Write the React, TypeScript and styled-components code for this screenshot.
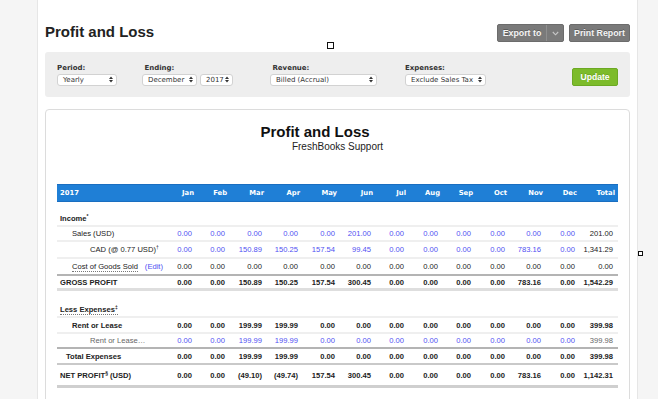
import React from "react";
import styled, { createGlobalStyle } from "styled-components";

const Global = createGlobalStyle`
  html, body { margin: 0; padding: 0; background: #f5f5f5; }
  body { font-family: "Liberation Sans", Arial, sans-serif; color: #222; overflow: hidden; }
  * { box-sizing: content-box; }
`;

const Page = styled.div`
  position: relative;
  width: 658px;
  height: 399px;
  overflow: hidden;
  background: #f5f5f5;
`;

const Main = styled.div`
  margin-left: 37px;
  width: 585px;
  height: 399px;
  padding: 0 7px;
  background: #fff;
  border-left: 1px solid #e6e6e6;
  border-right: 1px solid #e6e6e6;
`;

const TopBar = styled.div`
  display: flex;
  align-items: center;
  justify-content: space-between;
  padding-top: 24px;
  height: 18px;
`;

const PageTitle = styled.h1`
  margin: -2px 0 0;
  font-size: 15px;
  line-height: 18px;
  font-weight: bold;
  color: #222;
`;

const ButtonGroup = styled.div`
  display: flex;
  gap: 5px;
`;

const GrayButton = styled.div<{ $w: number }>`
  display: flex;
  align-items: stretch;
  width: ${(p) => p.$w}px;
  height: 18px;
  box-sizing: border-box;
  background: #7a7a7a;
  border: 1px solid #6c6c6c;
  border-radius: 2px;
  color: #f4f4f4;
  font-size: 8.8px;
  font-weight: bold;
  text-shadow: 0 -1px 0 rgba(0, 0, 0, 0.25);
`;

const ButtonPart = styled.span<{ $w?: number; $divider?: boolean }>`
  display: flex;
  align-items: center;
  justify-content: center;
  flex: ${(p) => (p.$w ? `0 0 ${p.$w}px` : "1")};
  border-left: ${(p) => (p.$divider ? "1px solid #8f8f8f" : "none")};
`;

const FilterBar = styled.div`
  margin-top: 10px;
  height: 45px;
  box-sizing: border-box;
  background: #eeeeee;
  border-radius: 3px;
  display: flex;
  align-items: center;
  padding: 0 12px;
`;

const FilterGroup = styled.div<{ $w?: number }>`
  display: flex;
  flex-direction: column;
  gap: 1px;
  width: ${(p) => (p.$w ? `${p.$w}px` : "auto")};
`;

const FilterLabel = styled.div`
  font-family: "DejaVu Sans", Verdana, sans-serif;
  font-weight: bold;
  font-size: 7px;
  line-height: 9px;
  color: #333;
`;

const SelectRow = styled.div`
  display: flex;
  gap: 3px;
`;

const SelectBox = styled.div<{ $w: number }>`
  display: flex;
  align-items: center;
  justify-content: space-between;
  width: ${(p) => p.$w}px;
  height: 12px;
  box-sizing: border-box;
  padding: 0 3px 0 5px;
  background: #fff;
  border: 1px solid #d2d2d2;
  border-radius: 3px;
  font-family: "DejaVu Sans", Verdana, sans-serif;
  font-size: 7px;
  color: #333;
  white-space: nowrap;
`;

const UpdateButton = styled.div`
  margin-left: auto;
  margin-top: 5px;
  width: 46px;
  height: 18px;
  box-sizing: border-box;
  display: flex;
  align-items: center;
  justify-content: center;
  background: #7cbb2a;
  border: 1px solid #6ca923;
  border-radius: 2px;
  color: #fff;
  font-size: 8.6px;
  font-weight: bold;
  text-shadow: 0 -1px 0 rgba(0, 0, 0, 0.15);
`;

const Card = styled.div`
  margin-top: 12px;
  height: 300px;
  border: 1px solid #dcdcdc;
  border-radius: 4px;
  padding: 0 11px;
  background: #fff;
`;

const ReportTitle = styled.div`
  padding-top: 13px;
  padding-right: 45px;
  font-size: 15px;
  line-height: 17px;
  font-weight: bold;
  text-align: center;
  color: #111;
`;

const ReportSub = styled.div`
  margin-top: 1px;
  font-size: 10px;
  line-height: 12px;
  text-align: center;
  color: #222;
`;

const Table = styled.div`
  margin-top: 31px;
`;

const COLS = "103px 37px 33px 37px 36px 37px 36px 33px 34px 33px 34px 36px 34px 38px";

const HeaderRow = styled.div`
  display: grid;
  grid-template-columns: ${COLS};
  align-items: center;
  height: 18px;
  background: #1f7fd6;
  box-shadow: inset 0 1px 0 #1a6ec0, inset 0 -1px 0 #1a6ec0;
  color: #fff;
  font-family: "DejaVu Sans", Verdana, sans-serif;
  font-weight: bold;
  font-size: 6.8px;
`;

const HeadCell = styled.div<{ $left?: boolean }>`
  text-align: ${(p) => (p.$left ? "left" : "right")};
  padding: ${(p) => (p.$left ? "0 0 0 3px" : "0 3px 0 0")};
`;

type Line = "light" | "dark" | "thick" | "thickDark" | "mid";
const lineStyle: Record<Line, string> = {
  light: "2px solid #efefef",
  mid: "2px solid #c9c9c9",
  dark: "2px solid #b4b4b4",
  thick: "3px solid #dedede",
  thickDark: "3px solid #cfcfcf",
};

const Row = styled.div<{ $h: number; $line: Line; $mt?: number }>`
  display: grid;
  grid-template-columns: ${COLS};
  align-items: center;
  height: ${(p) => p.$h}px;
  margin-top: ${(p) => p.$mt || 0}px;
  border-bottom: ${(p) => lineStyle[p.$line]};
  font-size: 7.6px;
  white-space: nowrap;
`;

type Tone = "blue" | "dark" | "gray";
const toneColor: Record<Tone, string> = {
  blue: "#5050f2",
  dark: "#222",
  gray: "#666",
};

const Cell = styled.div<{ $tone: Tone; $bold?: boolean }>`
  text-align: right;
  padding-right: 5px;
  color: ${(p) => toneColor[p.$tone]};
  font-weight: ${(p) => (p.$bold ? "bold" : "normal")};
`;

const LabelCell = styled.div<{ $indent: number; $bold?: boolean; $tone?: Tone }>`
  padding-left: ${(p) => p.$indent}px;
  font-weight: ${(p) => (p.$bold ? "bold" : "normal")};
  color: ${(p) => toneColor[p.$tone || "dark"]};
  overflow: visible;
`;

const Dotted = styled.span`
  border-bottom: 1px dotted #777;
`;

const EditLink = styled.span`
  color: #5050f2;
  margin-left: 7px;
`;

const Sup = styled.sup`
  font-size: 5px;
  line-height: 0;
  vertical-align: 3px;
`;

const Handle = styled.div<{ $x: number; $y: number; $s: number }>`
  position: absolute;
  left: ${(p) => p.$x}px;
  top: ${(p) => p.$y}px;
  width: ${(p) => p.$s}px;
  height: ${(p) => p.$s}px;
  box-sizing: border-box;
  border: 1px solid #111;
  background: #fff;
`;

const Arrows = () => (
  <svg width="4" height="7" viewBox="0 0 4 7">
    <path d="M0 3 L2 0.5 L4 3 Z M0 4 L2 6.5 L4 4 Z" fill="#333" />
  </svg>
);

const Chevron = () => (
  <svg width="7" height="5" viewBox="0 0 7 5">
    <polyline points="0.8,1 3.5,3.8 6.2,1" fill="none" stroke="#c8c8c8" strokeWidth="1.1" />
  </svg>
);

const MONTHS = ["Jan", "Feb", "Mar", "Apr", "May", "Jun", "Jul", "Aug", "Sep", "Oct", "Nov", "Dec", "Total"];

const z = (n: number) => Array(n).fill("0.00");

type RowDef = {
  label: React.ReactNode;
  indent: number;
  labelBold?: boolean;
  labelTone?: Tone;
  values: string[];
  tone: Tone;
  totalTone: Tone;
  bold?: boolean;
  h: number;
  line: Line;
  mt?: number;
};

const rowsIncome: RowDef[] = [
  {
    label: "Sales (USD)",
    indent: 15,
    values: [...z(5), "201.00", ...z(6), "201.00"],
    tone: "blue",
    totalTone: "dark",
    h: 13,
    line: "light",
  },
  {
    label: (
      <>
        CAD (@ 0.77 USD)<Sup>†</Sup>
      </>
    ),
    indent: 33,
    values: ["0.00", "0.00", "150.89", "150.25", "157.54", "99.45", "0.00", "0.00", "0.00", "0.00", "783.16", "0.00", "1,341.29"],
    tone: "blue",
    totalTone: "dark",
    h: 15,
    line: "light",
  },
  {
    label: (
      <>
        <Dotted>Cost of Goods Sold</Dotted>
        <EditLink>(Edit)</EditLink>
      </>
    ),
    indent: 15,
    values: z(13),
    tone: "dark",
    totalTone: "dark",
    h: 15,
    line: "dark",
  },
  {
    label: "GROSS PROFIT",
    indent: 3,
    labelBold: true,
    values: ["0.00", "0.00", "150.89", "150.25", "157.54", "300.45", "0.00", "0.00", "0.00", "0.00", "783.16", "0.00", "1,542.29"],
    tone: "dark",
    totalTone: "dark",
    bold: true,
    h: 12,
    line: "thick",
  },
];

const rentVals = ["0.00", "0.00", "199.99", "199.99", ...z(8), "399.98"];

const rowsExpenses: RowDef[] = [
  {
    label: "Rent or Lease",
    indent: 15,
    labelBold: true,
    values: rentVals,
    tone: "dark",
    totalTone: "dark",
    bold: true,
    h: 14,
    line: "light",
  },
  {
    label: "Rent or Lease…",
    indent: 33,
    labelTone: "gray",
    values: rentVals,
    tone: "blue",
    totalTone: "gray",
    h: 13,
    line: "dark",
  },
  {
    label: "Total Expenses",
    indent: 9,
    labelBold: true,
    values: rentVals,
    tone: "dark",
    totalTone: "dark",
    bold: true,
    h: 14,
    line: "mid",
  },
  {
    label: (
      <>
        NET PROFIT<Sup>§</Sup> (USD)
      </>
    ),
    indent: 3,
    labelBold: true,
    values: ["0.00", "0.00", "(49.10)", "(49.74)", "157.54", "300.45", "0.00", "0.00", "0.00", "0.00", "783.16", "0.00", "1,142.31"],
    tone: "dark",
    totalTone: "dark",
    bold: true,
    h: 20,
    line: "thickDark",
  },
];

const DataRow = ({ r }: { r: RowDef }) => (
  <Row $h={r.h} $line={r.line} $mt={r.mt}>
    <LabelCell $indent={r.indent} $bold={r.labelBold} $tone={r.labelTone}>
      {r.label}
    </LabelCell>
    {r.values.map((v, i) => (
      <Cell key={i} $tone={i === 12 ? r.totalTone : r.tone} $bold={r.bold}>
        {v}
      </Cell>
    ))}
  </Row>
);

const SectionRow = ({ children, mt, h }: { children: React.ReactNode; mt: number; h: number }) => (
  <Row $h={h} $line="light" $mt={mt}>
    <LabelCell $indent={3} $bold>
      {children}
    </LabelCell>
  </Row>
);

export default function App() {
  return (
    <Page>
      <Global />
      <Main>
        <TopBar>
          <PageTitle>Profit and Loss</PageTitle>
          <ButtonGroup>
            <GrayButton $w={67}>
              <ButtonPart>Export to</ButtonPart>
              <ButtonPart $w={16} $divider>
                <Chevron />
              </ButtonPart>
            </GrayButton>
            <GrayButton $w={61}>
              <ButtonPart>Print Report</ButtonPart>
            </GrayButton>
          </ButtonGroup>
        </TopBar>

        <FilterBar>
          <FilterGroup $w={85}>
            <FilterLabel>Period:</FilterLabel>
            <SelectBox $w={60}>
              Yearly <Arrows />
            </SelectBox>
          </FilterGroup>
          <FilterGroup $w={128}>
            <FilterLabel>&nbsp;Ending:</FilterLabel>
            <SelectRow>
              <SelectBox $w={55}>
                December <Arrows />
              </SelectBox>
              <SelectBox $w={33}>
                2017 <Arrows />
              </SelectBox>
            </SelectRow>
          </FilterGroup>
          <FilterGroup $w={135}>
            <FilterLabel>&nbsp;Revenue:</FilterLabel>
            <SelectBox $w={107}>
              Billed (Accrual) <Arrows />
            </SelectBox>
          </FilterGroup>
          <FilterGroup>
            <FilterLabel>Expenses:</FilterLabel>
            <SelectBox $w={81}>
              Exclude Sales Tax <Arrows />
            </SelectBox>
          </FilterGroup>
          <UpdateButton>Update</UpdateButton>
        </FilterBar>

        <Card>
          <ReportTitle>Profit and Loss</ReportTitle>
          <ReportSub>FreshBooks Support</ReportSub>
          <Table>
            <HeaderRow>
              <HeadCell $left>2017</HeadCell>
              {MONTHS.map((m) => (
                <HeadCell key={m}>{m}</HeadCell>
              ))}
            </HeaderRow>
            <SectionRow mt={9} h={14}>
              Income<Sup>*</Sup>
            </SectionRow>
            {rowsIncome.map((r, i) => (
              <DataRow key={i} r={r} />
            ))}
            <SectionRow mt={12} h={13}>
              <Dotted>
                Less Expenses<Sup>‡</Sup>
              </Dotted>
            </SectionRow>
            {rowsExpenses.map((r, i) => (
              <DataRow key={i} r={r} />
            ))}
          </Table>
        </Card>
      </Main>
      <Handle $x={327} $y={42} $s={7} />
      <Handle $x={638} $y={251} $s={5} />
    </Page>
  );
}
